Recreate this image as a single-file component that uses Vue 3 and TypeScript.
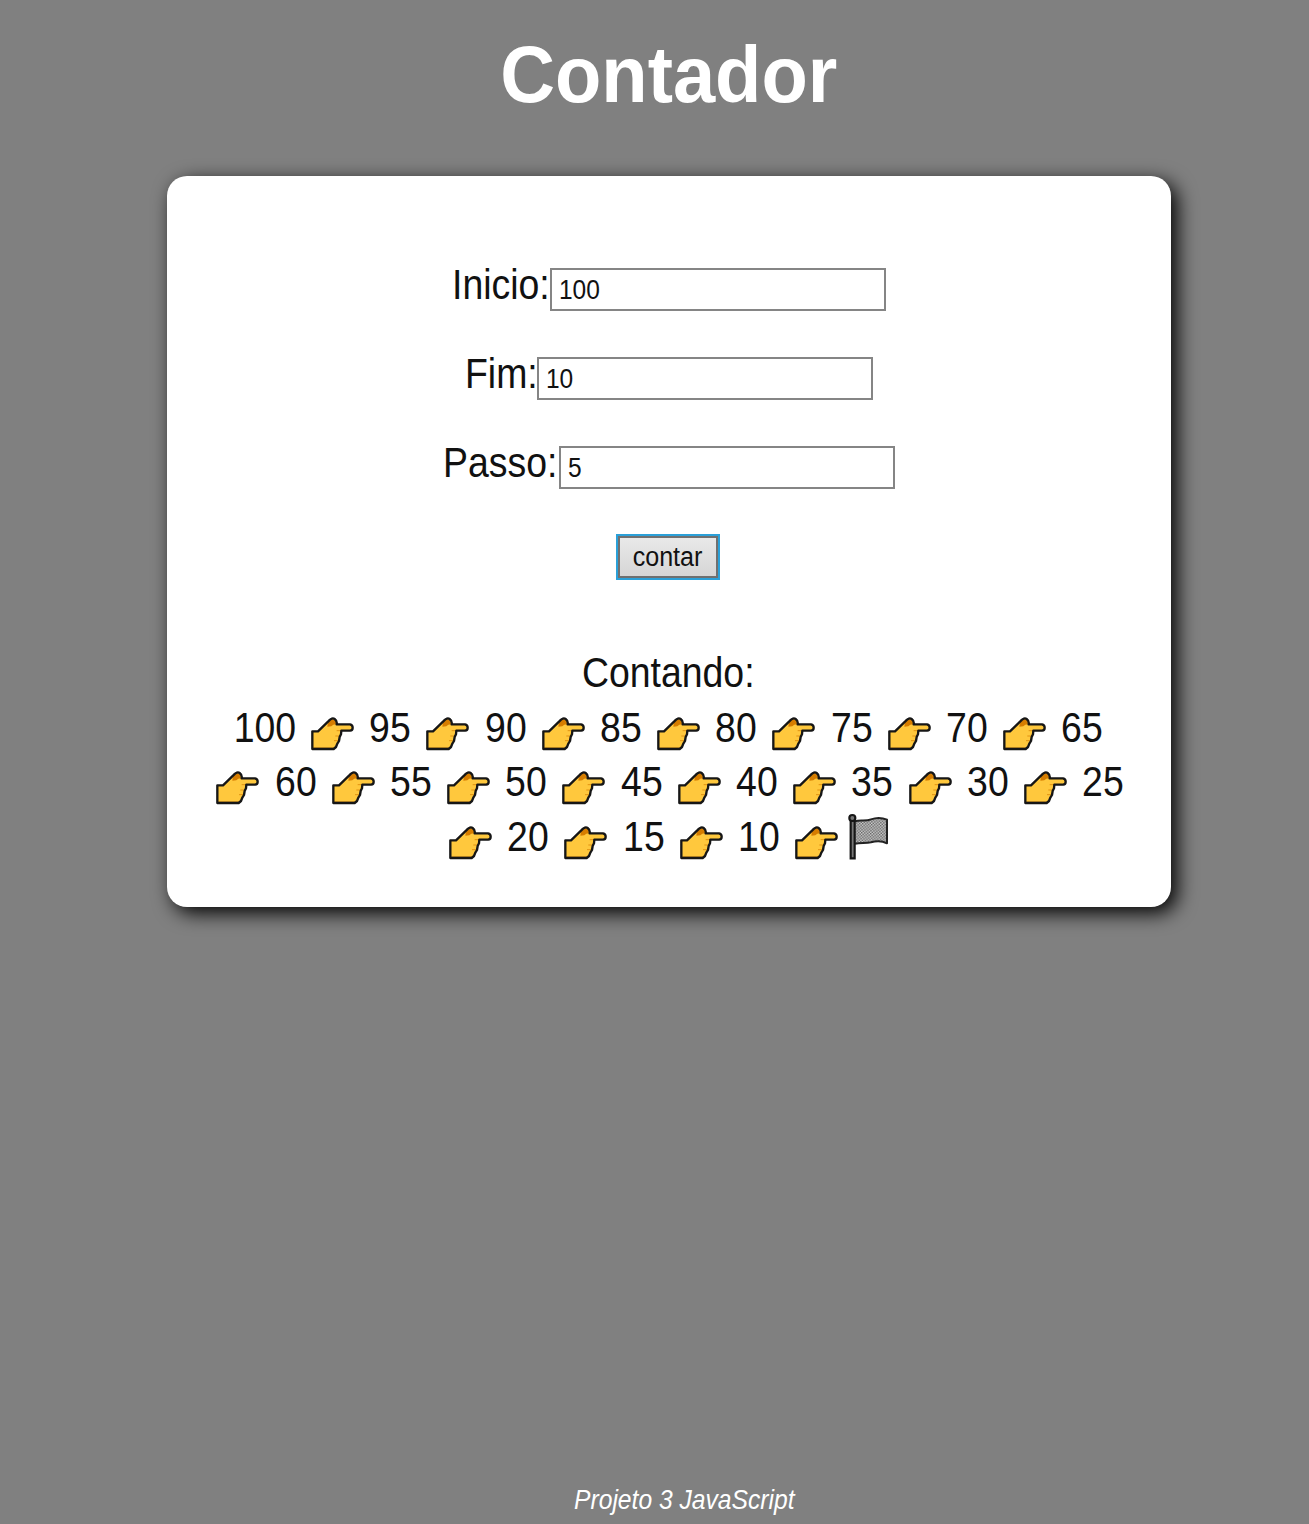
<script setup lang="ts">
import { ref } from 'vue'

interface Field {
  id: string
  label: string
  labelWidth: number
  value: string
}

const fields = ref<Field[]>([
  { id: 'inicio', label: 'Inicio:', labelWidth: 98, value: '100' },
  { id: 'fim', label: 'Fim:', labelWidth: 72, value: '10' },
  { id: 'passo', label: 'Passo:', labelWidth: 116, value: '5' },
])

type Token = string
const HAND = 'hand'
const FLAG = 'flag'

const rows: Token[][] = [
  ['100', HAND, '95', HAND, '90', HAND, '85', HAND, '80', HAND, '75', HAND, '70', HAND, '65'],
  [HAND, '60', HAND, '55', HAND, '50', HAND, '45', HAND, '40', HAND, '35', HAND, '30', HAND, '25'],
  [HAND, '20', HAND, '15', HAND, '10', HAND, FLAG],
]
</script>

<template>
  <div class="page">
    <header>
      <h1>Contador</h1>
    </header>

    <section class="card">
      <div v-for="f in fields" :key="f.id" class="field">
        <label :for="f.id" :style="{ width: f.labelWidth + 'px' }"><span>{{ f.label }}</span></label>
        <div class="box"><input :id="f.id" v-model="f.value" type="text" /></div>
      </div>
      <button type="button"><span>contar</span></button>

      <div class="result">
        <p class="heading"><span>Contando:</span></p>
        <div v-for="(row, i) in rows" :key="i" class="row" :class="'row-' + i">
          <div
            v-for="(t, j) in row"
            :key="j"
            class="cell"
            :class="{ wide: t.length === 3, end: t === 'flag' }"
          >
            <svg v-if="t === 'hand'" class="hand" viewBox="30 48 135 108">
              <path
                d="M37 147V94H54L84 65Q96 51 104 57Q112 63 110 73H150Q158 75 158 83Q158 91 150 92H124L123 103L119 111L117 123L112 131L108 141L101 147Z"
                fill="#ffc83d"
              />
              <path d="M84 66L97 57Q108 60 108 73Q99 73 94 79L82 80Z" fill="#d67d00" />
              <path d="M110 92H124M106 108H118M102 122H115" stroke="#d67d00" stroke-width="3" opacity=".7" />
              <path d="M40 143H102" stroke="#d99a22" stroke-width="3" />
              <path
                d="M37 147V94H54L84 65Q96 51 104 57Q112 63 110 73H150Q158 75 158 83Q158 91 150 92H124L123 103L119 111L117 123L112 131L108 141L101 147Z"
                fill="none"
                stroke="#161616"
                stroke-width="7"
                stroke-linejoin="round"
              />
            </svg>
            <svg v-else-if="t === 'flag'" class="flag" viewBox="195 65 135 150">
              <defs>
                <pattern id="checks" width="9" height="9" patternUnits="userSpaceOnUse" patternTransform="rotate(6)">
                  <rect width="9" height="9" fill="#d4d4d4" />
                  <rect width="4.5" height="4.5" fill="#606060" />
                  <rect x="4.5" y="4.5" width="4.5" height="4.5" fill="#606060" />
                </pattern>
              </defs>
              <path
                d="M222 93C236 87 252 94 270 87C286 81 304 82 318 88V159C302 151 288 151 270 156C254 160 240 156 222 160Z"
                fill="url(#checks)"
              />
              <path
                d="M222 93C236 87 252 94 270 87C286 81 304 82 318 88V159C302 151 288 151 270 156C254 160 240 156 222 160"
                fill="none"
                stroke="#222"
                stroke-width="6"
                stroke-linejoin="round"
              />
              <path d="M209 90H221V204H209Z" fill="#777" stroke="#161616" stroke-width="6.5" />
              <circle cx="214" cy="83" r="9" fill="#777" stroke="#161616" stroke-width="6.5" />
            </svg>
            <span v-else>{{ t }}</span>
          </div>
        </div>
      </div>
    </section>

    <footer><p>Projeto 3 JavaScript</p></footer>
  </div>
</template>

<style>
body {
  margin: 0;
  background: #808080;
}
</style>

<style scoped>
.page {
  display: flex;
  flex-direction: column;
  height: 1524px;
  overflow: hidden;
  background: #808080;
  font-family: 'Liberation Sans', Arial, sans-serif;
  color: #111;
}
header {
  height: 176px;
  padding-left: 28px;
  display: flex;
  justify-content: center;
}
h1 {
  margin: 30px 0 0;
  font-size: 80px;
  line-height: 90px;
  height: 90px;
  color: #fff;
  transform: scaleX(0.948);
}
.card {
  box-sizing: border-box;
  width: 1004px;
  height: 731px;
  margin-left: 167px;
  padding: 92px 1px 0 0;
  flex: none;
  display: flex;
  flex-direction: column;
  align-items: center;
  background: #fff;
  border-radius: 20px;
  box-shadow: 6px 6px 20px #000;
}
.field {
  display: flex;
  height: 43px;
  margin-bottom: 46px;
}
label {
  font-size: 43px;
  line-height: 33px;
  white-space: nowrap;
}
label span {
  display: inline-block;
  transform: scaleX(0.87);
  transform-origin: left;
}
.box {
  box-sizing: border-box;
  width: 336px;
  height: 43px;
  border: 2px solid #858585;
  overflow: hidden;
}
input {
  display: block;
  box-sizing: border-box;
  width: 380px;
  height: 39px;
  padding: 0 0 1px 8px;
  border: 0;
  outline: 0;
  background: transparent;
  color: #111;
  font: 28.5px 'Liberation Sans', Arial, sans-serif;
  transform: scaleX(0.86);
  transform-origin: left;
}
button {
  box-sizing: border-box;
  flex: none;
  width: 100px;
  height: 42px;
  margin: 1px 1px 0 0;
  padding: 0;
  border: 2px solid #707070;
  border-radius: 0;
  box-shadow: 0 0 0 2px #2ba0d8;
  background: linear-gradient(#e9e9e9, #d6d6d6);
  color: #111;
  font: 27px/36px 'Liberation Sans', Arial, sans-serif;
}
button span {
  display: inline-block;
  transform: scaleX(0.93);
}
.result {
  width: 100%;
  margin-top: 67px;
  font-size: 43px;
  line-height: 55px;
}
.heading {
  margin: 0;
  height: 54.5px;
  text-align: center;
}
.heading span,
.cell span {
  display: inline-block;
  transform: scaleX(0.87);
}
.row {
  display: flex;
  height: 54.8px;
}
.row-0 {
  padding-left: 59.6px;
}
.row-1 {
  padding-left: 42px;
}
.row-2 {
  padding-left: 274.6px;
}
.cell {
  flex: none;
  width: 57.7px;
  height: 55px;
  display: flex;
  justify-content: center;
}
.cell.wide {
  width: 77px;
}
.cell.end {
  width: 46px;
  align-items: flex-start;
}
.hand {
  width: 45px;
  height: 36px;
  margin-top: 16px;
}
.flag {
  width: 45px;
  height: 50px;
  margin-top: 3px;
}
footer {
  margin-top: auto;
  padding-left: 59px;
  display: flex;
  justify-content: center;
}
footer p {
  margin: 0 0 8px;
  font-size: 28px;
  line-height: 32px;
  font-style: italic;
  color: #fff;
  white-space: nowrap;
  transform: scaleX(0.88);
}
</style>
